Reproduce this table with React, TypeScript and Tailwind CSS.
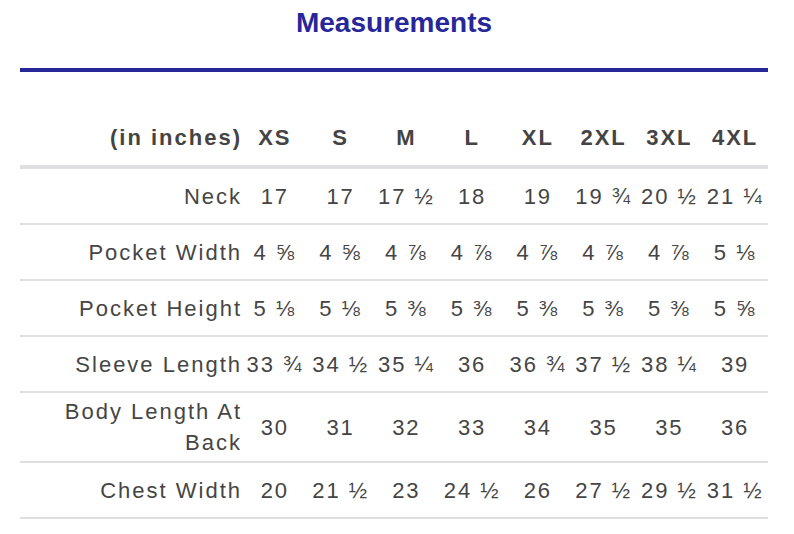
const sizes = ['XS', 'S', 'M', 'L', 'XL', '2XL', '3XL', '4XL'];

const rows: { label: string; values: string[] }[] = [
  { label: 'Neck', values: ['17', '17', '17 ½', '18', '19', '19 ¾', '20 ½', '21 ¼'] },
  { label: 'Pocket Width', values: ['4 ⅝', '4 ⅝', '4 ⅞', '4 ⅞', '4 ⅞', '4 ⅞', '4 ⅞', '5 ⅛'] },
  { label: 'Pocket Height', values: ['5 ⅛', '5 ⅛', '5 ⅜', '5 ⅜', '5 ⅜', '5 ⅜', '5 ⅜', '5 ⅝'] },
  { label: 'Sleeve Length', values: ['33 ¾', '34 ½', '35 ¼', '36', '36 ¾', '37 ½', '38 ¼', '39'] },
  { label: 'Body Length At Back', values: ['30', '31', '32', '33', '34', '35', '35', '36'] },
  { label: 'Chest Width', values: ['20', '21 ½', '23', '24 ½', '26', '27 ½', '29 ½', '31 ½'] },
];

export default function App() {
  return (
    <div className="min-h-[534px] bg-white pl-[20px] pr-[26px] font-['Liberation_Sans',Arial,sans-serif] text-[#454545]">
      <h1 className="pt-[7px] text-center text-[28px] font-bold leading-[32px] text-[#27279a]">
        Measurements
      </h1>
      <div className="mt-[29px] h-[4px] bg-[#27279a]" />

      {/* size chart */}
      <div className="mt-[39px] text-[22px] leading-[31px] tracking-[2px]">
        <div className="grid h-[58px] grid-cols-[222px_repeat(8,minmax(0,1fr))] items-end border-b-4 border-[#dfdfe3] pb-[12px] font-bold text-[#444]">
          <div className="text-right">(in inches)</div>
          {sizes.map((s) => (
            <div key={s} className="text-center">
              {s}
            </div>
          ))}
        </div>

        {rows.map((row) => (
          <div
            key={row.label}
            className="grid min-h-[56px] grid-cols-[222px_repeat(8,minmax(0,1fr))] items-center border-b-2 border-[#dfdfe3] py-[3px]"
          >
            <div className="text-right">{row.label}</div>
            {row.values.map((v, i) => (
              <div key={i} className="whitespace-nowrap text-center">
                {v}
              </div>
            ))}
          </div>
        ))}
      </div>
    </div>
  );
}
